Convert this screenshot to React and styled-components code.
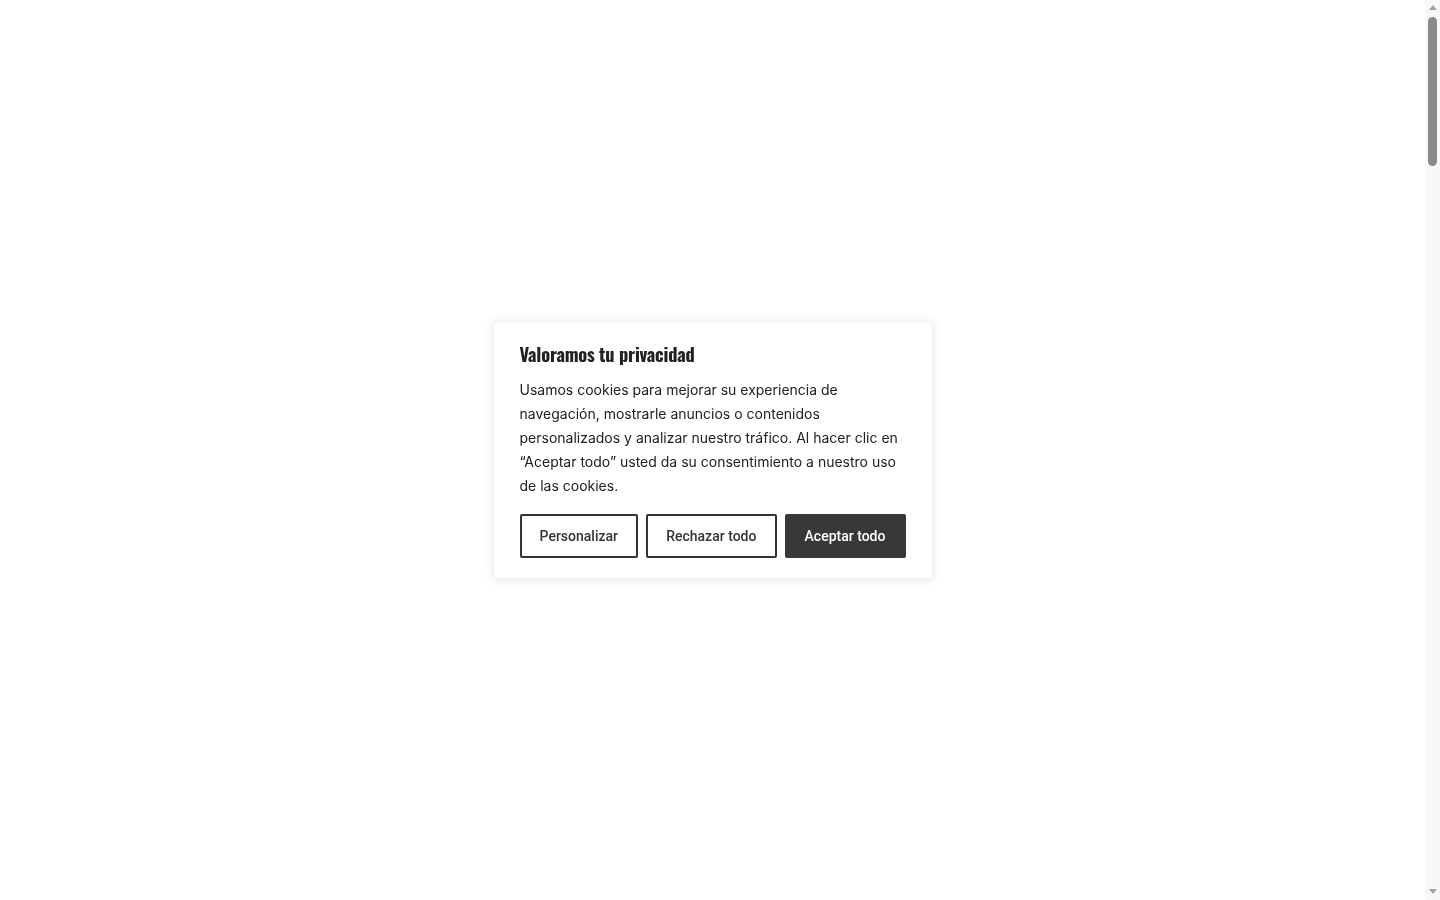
import React from 'react';
import styled, { createGlobalStyle } from 'styled-components';

const GlobalStyle = createGlobalStyle`
  html, body {
    margin: 0;
    padding: 0;
    background: #fff;
  }
  body {
    font-family: Inter, "Noto Sans", sans-serif;
    color: #212121;
  }
`;

const Page = styled.div`
  height: 5300px;
  background: #fff;
`;

// fake browser scrollbar, drawn over the right edge like the reference
const ScrollTrack = styled.div`
  position: fixed;
  top: 0;
  right: 0;
  bottom: 0;
  width: 15px;
  background: #f8f8f8;
  display: flex;
  flex-direction: column;
  align-items: center;
`;

const Arrow = styled.div`
  width: 0;
  height: 0;
  margin: ${(p) => (p.$down ? '0 0 6px' : '5px 0 0')};
  border-left: 4.5px solid transparent;
  border-right: 4.5px solid transparent;
  ${(p) => (p.$down ? 'border-top: 5px solid #a3a3a3;' : 'border-bottom: 5px solid #a3a3a3;')}
`;

const Thumb = styled.div`
  width: 9px;
  height: 149px;
  margin-top: 7px;
  border-radius: 5px;
  background: #8a8a8a;
`;

const Spacer = styled.div`
  flex: 1;
`;

const Overlay = styled.div`
  position: fixed;
  top: 0;
  left: 0;
  bottom: 0;
  right: 15px;
  display: flex;
  align-items: center;
  justify-content: center;
  pointer-events: none;
`;

const Banner = styled.div`
  pointer-events: auto;
  box-sizing: border-box;
  width: 440px;
  padding: 18px 26px 20px;
  background: #fff;
  border: 1px solid #f2f2f2;
  border-radius: 4px;
  box-shadow: 0 1px 10px rgba(0, 0, 0, 0.1);
`;

const Title = styled.h2`
  margin: 1px 0 11px;
  font-family: Oswald, "Liberation Sans Narrow", "DejaVu Sans Condensed", sans-serif;
  font-weight: 700;
  font-size: 18.4px;
  line-height: 26px;
  color: #212121;
  letter-spacing: -0.2px;
`;

const Text = styled.p`
  margin: 0 0 16px;
  font-family: Inter, "Noto Sans", sans-serif;
  font-size: 14px;
  line-height: 24px;
  color: #212121;
`;

const Actions = styled.div`
  display: flex;
  gap: 8px;
`;

const Button = styled.button`
  flex: 1 1 auto;
  height: 44px;
  padding: 0 18px;
  border: 2px solid ${(p) => (p.$primary ? '#383838' : '#333')};
  border-radius: 2px;
  background: ${(p) => (p.$primary ? '#383838' : '#fff')};
  color: ${(p) => (p.$primary ? '#fff' : '#333')};
  font-family: Roboto, "Liberation Sans", sans-serif;
  font-weight: 500;
  font-size: 14px;
  cursor: pointer;
  white-space: nowrap;
`;

const App = () => (
  <>
    <GlobalStyle />
    <Page />
    <Overlay>
      <Banner>
        <Title>Valoramos tu privacidad</Title>
        <Text>
          Usamos cookies para mejorar su experiencia de navegación, mostrarle anuncios o
          contenidos personalizados y analizar nuestro tráfico. Al hacer clic en “Aceptar
          todo” usted da su consentimiento a nuestro uso de las cookies.
        </Text>
        <Actions>
          <Button>Personalizar</Button>
          <Button>Rechazar todo</Button>
          <Button $primary>Aceptar todo</Button>
        </Actions>
      </Banner>
    </Overlay>
    <ScrollTrack>
      <Arrow />
      <Thumb />
      <Spacer />
      <Arrow $down />
    </ScrollTrack>
  </>
);

export default App;
